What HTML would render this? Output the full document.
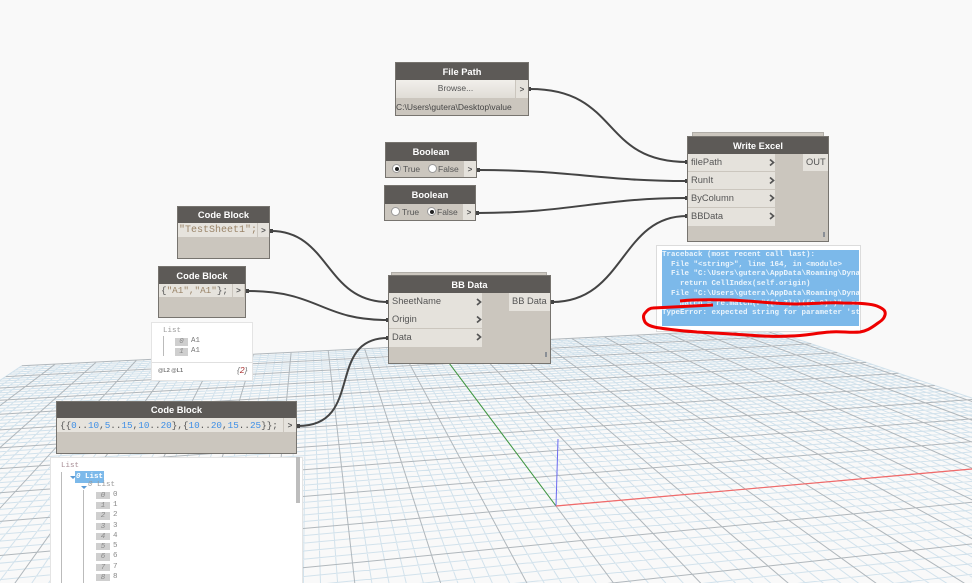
<!DOCTYPE html>
<html><head><meta charset="utf-8"><style>
html,body{margin:0;padding:0;background:#f9f9f9;overflow:hidden}
#c{position:relative;width:972px;height:583px;overflow:hidden;background:#f9f9f9;font-family:"Liberation Sans",sans-serif;font-size:9.5px;color:#555;filter:blur(.35px)}
svg{position:absolute;left:0;top:0}
.n{position:absolute;background:#cbc6be;box-sizing:border-box;border:1px solid #77746f}
.h{position:absolute;left:0;right:0;top:0;background:#5d5a57;color:#fff;font-weight:bold;text-align:center;font-size:9.3px}
.a{position:absolute;white-space:pre}
.p{position:absolute;background:#e5e2dc;box-sizing:border-box;padding-left:3px;white-space:pre;line-height:17px;font-size:9.3px;color:#555}
.m{font-family:"Liberation Mono",monospace}
.g{position:absolute;background:#cfcfcf;color:#888;font:italic 7.5px/9px "Liberation Mono",monospace;text-align:center}
.v{position:absolute;color:#888;font:7.5px/9px "Liberation Mono",monospace}
.r{position:absolute;width:9px;height:9px;border-radius:50%;background:#fff;border:1px solid #999;box-sizing:border-box}
.r.on:after{content:"";position:absolute;left:1.5px;top:1.5px;width:4px;height:4px;border-radius:50%;background:#222}
.gt{position:absolute;background:#e5e2dc;text-align:center;font-size:8px;font-weight:bold;color:#555}
.stack{position:absolute;background:#cbc6be;border:1px solid #b0ada7;box-sizing:border-box}
</style></head><body><div id="c">
<svg id="grid" width="972" height="583"></svg>
<svg width="972" height="583">
<line x1="556" y1="506" x2="449" y2="363" stroke="#3f9a3f" stroke-width="1"/>
<line x1="556" y1="506" x2="558" y2="439" stroke="#6a6af0" stroke-width="1"/>
<line x1="556" y1="506" x2="972" y2="469" stroke="#f26a6a" stroke-width="1.2"/>
<g fill="none" stroke="#444" stroke-width="2">
<path d="M530 89C620 89 600 162 687 162"/>
<path d="M478 170C570 170 600 181 687 181"/>
<path d="M477 213C570 213 600 198 687 198"/>
<path d="M552 302C625 302 620 216 687 216"/>
<path d="M271 231C330 231 325 302 388 302"/>
<path d="M247 291C320 291 320 320 388 320"/>
<path d="M298 426C365 426 325 338 388 338"/>
</g>
<g fill="#444">
<rect x="528" y="87" width="3" height="4"/><rect x="477" y="168" width="3" height="4"/><rect x="476" y="211" width="3" height="4"/>
<rect x="270" y="229" width="3" height="4"/><rect x="246" y="289" width="3" height="4"/><rect x="297" y="424" width="3" height="4"/>
<rect x="551" y="300" width="3" height="4"/>
<rect x="685" y="160" width="3" height="4"/><rect x="685" y="179" width="3" height="4"/><rect x="685" y="196" width="3" height="4"/><rect x="685" y="214" width="3" height="4"/>
<rect x="386" y="300" width="3" height="4"/><rect x="386" y="318" width="3" height="4"/><rect x="386" y="336" width="3" height="4"/>
</g>
</svg>

<!-- File Path -->
<div class="n" style="left:395px;top:62px;width:134px;height:54px">
<div class="h" style="height:17px;line-height:18px">File Path</div>
<div class="a" style="left:0;top:17px;width:119px;height:18px;background:linear-gradient(#f1efeb,#dfdcd6);text-align:center;line-height:17px;font-size:8.5px">Browse...</div>
<div class="gt" style="left:120px;top:17px;width:12px;height:18px;line-height:20px">&gt;</div>
<div class="a" style="left:0;top:36px;line-height:16px;font-size:8.5px;color:#444">C:\Users\gutera\Desktop\value</div>
</div>

<!-- Boolean 1 -->
<div class="n" style="left:385px;top:142px;width:92px;height:36px">
<div class="h" style="height:18px;line-height:18px">Boolean</div>
<div class="r on" style="left:6px;top:21px"></div><div class="a" style="left:17px;top:19px;line-height:14px;font-size:8.5px">True</div>
<div class="r" style="left:42px;top:21px"></div><div class="a" style="left:52px;top:19px;line-height:14px;font-size:8.5px">False</div>
<div class="gt" style="left:78px;top:18px;width:12px;height:16px;line-height:17px">&gt;</div>
</div>
<!-- Boolean 2 -->
<div class="n" style="left:384px;top:185px;width:92px;height:36px">
<div class="h" style="height:18px;line-height:18px">Boolean</div>
<div class="r" style="left:6px;top:21px"></div><div class="a" style="left:17px;top:19px;line-height:14px;font-size:8.5px">True</div>
<div class="r on" style="left:42px;top:21px"></div><div class="a" style="left:52px;top:19px;line-height:14px;font-size:8.5px">False</div>
<div class="gt" style="left:78px;top:18px;width:12px;height:16px;line-height:17px">&gt;</div>
</div>

<!-- Write Excel -->
<div class="stack" style="left:692px;top:132px;width:132px;height:6px"></div>
<div class="n" style="left:687px;top:136px;width:142px;height:106px">
<div class="h" style="height:17px;line-height:18px">Write Excel</div>
<div class="p" style="left:0;top:17px;width:87px;height:17px">filePath</div>
<div class="p" style="left:0;top:35px;width:87px;height:17px">RunIt</div>
<div class="p" style="left:0;top:53px;width:87px;height:17px">ByColumn</div>
<div class="p" style="left:0;top:71px;width:87px;height:18px">BBData</div>
<div class="p" style="left:115px;top:17px;width:25px;height:17px">OUT</div>
<div class="a" style="left:135px;top:95px;width:1px;height:5px;background:#8a8f96;border-left:1px solid #8a8f96"></div>
</div>

<!-- Error -->
<div class="a" style="left:656px;top:245px;width:205px;height:87px;background:#fff;border:1px solid #dcdcdc;box-sizing:border-box"></div>
<div class="a m" style="left:662px;top:250px;width:197px;height:76px;background:#7cb9ea;color:#eaf4fc;font-size:7.5px;font-weight:bold;line-height:9.7px;overflow:hidden;box-sizing:border-box;padding-top:1px">Traceback (most recent call last):
  File "&lt;string&gt;", line 164, in &lt;module&gt;
  File "C:\Users\gutera\AppData\Roaming\Dynamo
    return CellIndex(self.origin)
  File "C:\Users\gutera\AppData\Roaming\Dynamo
    match = re.match(r"([A-Z]+)([0-9]+)", self
TypeError: expected string for parameter 'string'</div>
<svg width="972" height="583"><path d="M680 301C700 299 715 300 730 300C755 301 775 304 797 304C815 304 830 302 843 303C860 303 872 304 877 306C884 309 886 311 885 315C884 319 881 321 878 323C870 329 866 331 860 332C850 333 840 331 830 332C815 333 805 336 790 336C775 337 760 336 747 335C730 334 715 333 697 332C685 331 672 330 660 328C652 327 647 325 645 322C643 318 643 315 645 313C648 309 651 308 653 308C670 307 690 306 713 305" fill="none" stroke="#ee0000" stroke-width="3"/></svg>

<!-- BB Data -->
<div class="stack" style="left:391px;top:272px;width:156px;height:6px"></div>
<div class="n" style="left:388px;top:275px;width:163px;height:89px">
<div class="h" style="height:17px;line-height:18px">BB Data</div>
<div class="p" style="left:0;top:17px;width:93px;height:18px">SheetName</div>
<div class="p" style="left:0;top:35px;width:93px;height:17px">Origin</div>
<div class="p" style="left:0;top:53px;width:93px;height:18px">Data</div>
<div class="p" style="left:120px;top:17px;width:41px;height:18px">BB Data</div>
<div class="a" style="left:156px;top:76px;width:2px;height:5px;background:#8a8f96"></div>
</div>
<svg width="972" height="583"><g fill="none" stroke="#555" stroke-width="1.7">
<path d="M770 159.5l3.5 3-3.5 3M770 177.5l3.5 3-3.5 3M770 195l3.5 3-3.5 3M770 213l3.5 3-3.5 3"/>
<path d="M477 299l3.5 3-3.5 3M477 316.5l3.5 3-3.5 3M477 334l3.5 3-3.5 3"/>
</g></svg>

<!-- Code Block 1 -->
<div class="n" style="left:177px;top:206px;width:93px;height:53px">
<div class="h" style="height:16px;line-height:17px">Code Block</div>
<div class="a m" style="left:0;top:16px;width:79px;height:14px;background:#e6e3dd;color:#9a8468;font-size:10px;line-height:15px;padding-left:1px;box-sizing:border-box;overflow:hidden">"TestSheet1";</div>
<div class="gt" style="left:80px;top:16px;width:11px;height:14px;line-height:15px">&gt;</div>
</div>
<!-- Code Block 2 -->
<div class="n" style="left:158px;top:266px;width:88px;height:52px">
<div class="h" style="height:17px;line-height:18px">Code Block</div>
<div class="a m" style="left:0;top:17px;width:73px;height:13px;background:#e6e3dd;color:#9a8468;font-size:9.3px;line-height:14px;padding-left:2px;box-sizing:border-box"><span style="color:#555">{</span>"A1","A1"<span style="color:#555">};</span></div>
<div class="gt" style="left:74px;top:17px;width:11px;height:13px;line-height:14px">&gt;</div>
</div>
<!-- Watch small -->
<div class="a" style="left:151px;top:322px;width:102px;height:59px;background:#fff;border:1px solid #e4e4e4;box-sizing:border-box"></div>
<div class="a" style="left:152px;top:362px;width:100px;height:1px;background:#e0e0e0"></div>
<div class="a m" style="left:163px;top:327px;font-size:7.5px;line-height:9px;color:#999">List</div>
<div class="a" style="left:163px;top:336px;width:1px;height:20px;background:#bbb"></div>
<div class="g" style="left:175px;top:338px;width:13px;height:8px;line-height:8px">0</div><div class="v" style="left:191px;top:337px;color:#777">A1</div>
<div class="g" style="left:175px;top:348px;width:13px;height:8px;line-height:8px">1</div><div class="v" style="left:191px;top:347px;color:#777">A1</div>
<div class="a" style="left:158px;top:367px;font-size:5.5px;line-height:8px;color:#777;font-weight:bold">@L2 @L1</div>
<div class="a" style="left:237px;top:365px;font-size:8.5px;line-height:10px;font-style:italic;color:#777">{<span style="color:#a33">2</span>}</div>

<!-- Code Block 3 -->
<div class="n" style="left:56px;top:401px;width:241px;height:53px">
<div class="h" style="height:16px;line-height:17px">Code Block</div>
<div class="a m" style="left:0;top:16px;width:226px;height:14px;background:#e6e3dd;color:#555;font-size:9.3px;line-height:15px;padding-left:3px;box-sizing:border-box">{{<span style="color:#3f8fe6">0</span>..<span style="color:#3f8fe6">10</span>,<span style="color:#3f8fe6">5</span>..<span style="color:#3f8fe6">15</span>,<span style="color:#3f8fe6">10</span>..<span style="color:#3f8fe6">20</span>},{<span style="color:#3f8fe6">10</span>..<span style="color:#3f8fe6">20</span>,<span style="color:#3f8fe6">15</span>..<span style="color:#3f8fe6">25</span>}};</div>
<div class="gt" style="left:227px;top:16px;width:12px;height:14px;line-height:15px">&gt;</div>
</div>
<!-- Watch large -->
<div class="a" style="left:50px;top:457px;width:253px;height:126px;background:#fff;border:1px solid #e4e4e4;border-bottom:0;box-sizing:border-box"></div>
<div class="a" style="left:296px;top:457px;width:4px;height:46px;background:#bdbdbd"></div>
<div class="a m" style="left:61px;top:462px;font-size:7.5px;line-height:9px;color:#a58a92">List</div>
<div class="a" style="left:61px;top:472px;width:1px;height:111px;background:#bbb"></div>
<svg width="972" height="583"><path d="M70 476h6l-3 3zM81 486h6l-3 3z" fill="#5b9bd5"/></svg>
<div class="a m" style="left:75px;top:471px;width:29px;height:12px;background:#7cb9ea;color:#fff;font-size:7.5px;font-weight:bold;line-height:12px;padding-left:1px;box-sizing:border-box"><i>0</i> List</div>
<div class="a m" style="left:88px;top:481px;font-size:7.5px;line-height:9px;color:#999"><i>0</i> List</div>
<div class="a" style="left:83px;top:490px;width:1px;height:93px;background:#bbb"></div>
<div class="g" style="left:96px;top:492px;width:14px;height:7px;line-height:8px">0</div><div class="v" style="left:113px;top:491px">0</div>
<div class="g" style="left:96px;top:502px;width:14px;height:7px;line-height:8px">1</div><div class="v" style="left:113px;top:501px">1</div>
<div class="g" style="left:96px;top:512px;width:14px;height:8px;line-height:8px">2</div><div class="v" style="left:113px;top:511px">2</div>
<div class="g" style="left:96px;top:523px;width:14px;height:7px;line-height:8px">3</div><div class="v" style="left:113px;top:522px">3</div>
<div class="g" style="left:96px;top:533px;width:14px;height:7px;line-height:8px">4</div><div class="v" style="left:113px;top:532px">4</div>
<div class="g" style="left:96px;top:543px;width:14px;height:7px;line-height:8px">5</div><div class="v" style="left:113px;top:542px">5</div>
<div class="g" style="left:96px;top:553px;width:14px;height:8px;line-height:8px">6</div><div class="v" style="left:113px;top:552px">6</div>
<div class="g" style="left:96px;top:564px;width:14px;height:7px;line-height:8px">7</div><div class="v" style="left:113px;top:563px">7</div>
<div class="g" style="left:96px;top:574px;width:14px;height:7px;line-height:8px">8</div><div class="v" style="left:113px;top:573px">8</div>
</div>
<script>
(function(){
var O=[556,506],R=[4820,126],G=[308,174],a=0.0031,b=0.0188;
function P(u,v){var s=a*u,t=b*v,w=1+s+t;return [(O[0]+s*R[0]+t*G[0])/w,(O[1]+s*R[1]+t*G[1])/w];}
var U0=-54,U1=51,V0=-30,V1=50,minor="",major="";
function seg(p,q){return "M"+p[0].toFixed(1)+" "+p[1].toFixed(1)+"L"+q[0].toFixed(1)+" "+q[1].toFixed(1);}
for(var u=U0;u<=U1;u++){var s=seg(P(u,V0),P(u,V1));if(u%5==0)major+=s;else minor+=s;}
for(var v=V0;v<=V1;v++){var s=seg(P(U0,v),P(U1,v));if(v%5==0)major+=s;else minor+=s;}
document.getElementById("grid").innerHTML='<path d="'+minor+'" fill="none" stroke="#d2e2ec" stroke-width="1"/><path d="'+major+'" fill="none" stroke="#b0b7bc" stroke-width="1"/>';
})();
</script>
</body></html>
